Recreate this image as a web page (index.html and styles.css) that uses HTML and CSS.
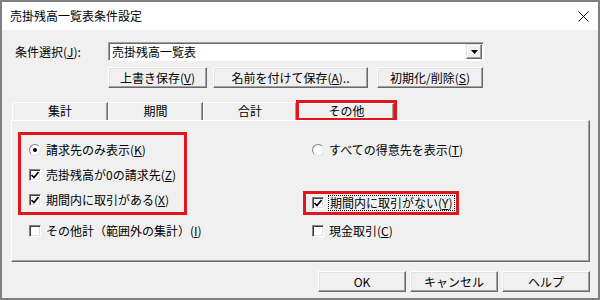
FILE: index.html
```html
<!DOCTYPE html>
<html lang="ja">
<head>
  <meta charset="UTF-8">
  <title>売掛残高一覧表条件設定</title>
  <link rel="stylesheet" href="styles.css">
</head>
<body>

<div class="dialog">
  <!-- Title bar -->
  <div class="titlebar">
    <span class="title">売掛残高一覧表条件設定</span>
    <svg class="close" width="11" height="11" viewBox="0 0 11 11">
      <path d="M0.5 0.5 L10.5 10.5 M10.5 0.5 L0.5 10.5" stroke="#000" stroke-width="1" fill="none"/>
    </svg>
  </div>

  <div class="content">
    <!-- Condition select -->
    <div class="cond-row">
      <label class="cond-label">条件選択(<u>J</u>):</label>
      <div class="combo">
        <span class="combo-text">売掛残高一覧表</span>
        <span class="drop">
          <svg width="7" height="4" viewBox="0 0 7 4"><path d="M0 0 H7 L3.5 4 Z" fill="#000"/></svg>
        </span>
      </div>
    </div>

    <div class="save-row">
      <button class="btn w-save">上書き保存(<u>V</u>)</button>
      <button class="btn w-name">名前を付けて保存(<u>A</u>)..</button>
      <button class="btn w-init">初期化/削除(<u>S</u>)</button>
    </div>

    <!-- Tabs -->
    <div class="tabs">
      <div class="tab t1">集計</div>
      <div class="tab t2">期間</div>
      <div class="tab t3">合計</div>
      <div class="tab active">その他</div>
    </div>

    <div class="panel">
      <div class="col col-left">
        <div class="hl hl-left">
          <div class="row"><span class="radio on"></span><span>請求先のみ表示(<u>K</u>)</span></div>
          <div class="row"><span class="check on"><svg width="10" height="10" viewBox="0 0 10 10"><path d="M1.5 5 L4 7.5 L8.5 2" stroke="#000" stroke-width="1.7" fill="none"/></svg></span><span>売掛残高が0の請求先(<u>Z</u>)</span></div>
          <div class="row"><span class="check on"><svg width="10" height="10" viewBox="0 0 10 10"><path d="M1.5 5 L4 7.5 L8.5 2" stroke="#000" stroke-width="1.7" fill="none"/></svg></span><span>期間内に取引がある(<u>X</u>)</span></div>
        </div>
        <div class="row row-last"><span class="check"></span><span>その他計（範囲外の集計）(<u>I</u>)</span></div>
      </div>

      <div class="col col-right">
        <div class="row row-first"><span class="radio"></span><span>すべての得意先を表示(<u>T</u>)</span></div>
        <div class="hl hl-right">
          <div class="row row-short"><span class="check on"><svg width="10" height="10" viewBox="0 0 10 10"><path d="M1.5 5 L4 7.5 L8.5 2" stroke="#000" stroke-width="1.7" fill="none"/></svg></span><span class="focus">期間内に取引がない(<u>Y</u>)</span></div>
        </div>
        <div class="row row-last"><span class="check"></span><span>現金取引(<u>C</u>)</span></div>
      </div>
    </div>

    <!-- Dialog buttons -->
    <div class="footer">
      <button class="btn w-foot">OK</button>
      <button class="btn w-foot">キャンセル</button>
      <button class="btn w-foot">ヘルプ</button>
    </div>
  </div>
</div>

</body>
</html>
```

FILE: styles.css
```css
* {
  box-sizing: border-box;
}
body {
  margin: 0;
  font-family: "Noto Sans CJK JP", "Noto Sans", sans-serif;
  font-size: 12px;
  color: #000;
  background: #fff;
}
u {
  text-decoration: underline;
  text-underline-offset: 1px;
}

/* Window frame */
.dialog {
  width: 600px;
  height: 300px;
  border: 2px solid #7f7f7f;
  background: #f0f0f0;
  display: flex;
  flex-direction: column;
}
.titlebar {
  height: 28px;
  background: #fff;
  display: flex;
  align-items: center;
  justify-content: space-between;
  padding: 0 9px 0 8px;
}
.title {
  font-size: 12px;
  line-height: 14px;
}

.content {
  flex: 1;
  padding: 0 8px 0 9px;
  display: flex;
  flex-direction: column;
}

/* Condition row */
.cond-row {
  display: flex;
  align-items: center;
  margin-top: 12px;
  height: 19px;
}
.cond-label {
  width: 97px;
  padding-left: 4px;
  line-height: 14px;
}
.combo {
  width: 376px;
  height: 19px;
  background: #fff;
  border: 1px solid;
  border-color: #a0a0a0 #fff #fff #a0a0a0;
  box-shadow: inset 1px 1px #696969;
  display: flex;
  align-items: center;
  justify-content: space-between;
  padding: 0 1px 0 3px;
}
.combo-text {
  line-height: 14px;
}
.drop {
  width: 16px;
  height: 15px;
  background: #f0f0f0;
  border: 1px solid;
  border-color: #e3e3e3 #696969 #696969 #e3e3e3;
  box-shadow: inset -1px -1px #a0a0a0, inset 1px 1px #fff;
  display: flex;
  align-items: center;
  justify-content: center;
}

/* Buttons */
.btn {
  height: 21px;
  padding: 0;
  font: inherit;
  line-height: 14px;
  color: #000;
  background: #f0f0f0;
  border: 1px solid;
  border-color: #fff #696969 #696969 #fff;
  box-shadow: inset -1px -1px #a0a0a0, inset 1px 1px #e3e3e3;
}
.save-row {
  display: flex;
  margin: 6px 0 0 97px;
}
.w-save { width: 99px; }
.w-name { width: 155px; margin-left: 6px; }
.w-init { width: 106px; margin-left: 9px; }

/* Tabs */
.tabs {
  display: flex;
  height: 18px;
  margin: 14px 0 0 1px;
}
.tab {
  height: 18px;
  line-height: 16px;
  text-align: center;
  border-top: 1px solid #fff;
  border-left: 1px solid #fff;
  border-right: 1px solid #696969;
  box-shadow: inset -1px 0 #a0a0a0;
}
.t1 { width: 96px; }
.t2 { width: 95px; }
.t3 { width: 94px; }
.tab.active {
  width: 95px;
  height: 15px;
  line-height: 13px;
  margin: 1px 0 0 2px;
  outline: 3px solid #e3141c;
}

/* Tab page */
.panel {
  height: 142px;
  border: 1px solid;
  border-color: #fff #696969 #696969 #fff;
  box-shadow: inset -1px -1px #a0a0a0;
  display: flex;
  padding: 11px 0 0 6px;
}
.col-left {
  width: 285px;
}
.hl {
  border: 3px solid #e3141c;
}
.hl-left {
  width: 169px;
  padding: 2px 0 0 8px;
}
.hl-right {
  width: 156px;
  margin-top: 29px;
  padding-left: 6px;
}
.row {
  display: flex;
  align-items: center;
  gap: 5px;
  height: 25px;
  line-height: 14px;
}
.row-short {
  height: 18px;
}
.row-first {
  margin-top: 5px;
  padding-left: 9px;
}
.col-left .row-last {
  margin-top: 3px;
  padding-left: 11px;
}
.col-right .row-last {
  margin-top: 3px;
  padding-left: 9px;
}

/* Check boxes and radios */
.check {
  width: 12px;
  height: 12px;
  flex: none;
  background: #fff;
  border: 1px solid;
  border-color: #808080 #fff #fff #808080;
  box-shadow: inset 1px 1px #404040, inset -1px -1px #e3e3e3;
  display: flex;
  align-items: center;
  justify-content: center;
}
.radio {
  width: 12px;
  height: 12px;
  flex: none;
  border-radius: 50%;
  background: #fff;
  border: 1px solid;
  border-color: #808080 #e3e3e3 #e3e3e3 #808080;
  display: flex;
  align-items: center;
  justify-content: center;
}
.radio.on::after {
  content: "";
  width: 4px;
  height: 4px;
  border-radius: 50%;
  background: #000;
}
.focus {
  outline: 1px dotted #000;
  padding: 0 1px;
}

/* Dialog footer */
.footer {
  display: flex;
  justify-content: flex-end;
  gap: 4px;
  margin-top: 9px;
}
.w-foot {
  width: 88px;
}
```
